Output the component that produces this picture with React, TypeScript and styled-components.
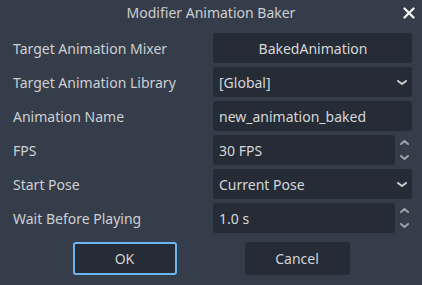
import React from "react";
import styled, { createGlobalStyle } from "styled-components";

const Global = createGlobalStyle`
  html, body {
    margin: 0;
    padding: 0;
    background: #363d4a;
  }
  body {
    font-family: "Noto Sans", "Open Sans", sans-serif;
    font-size: 14px;
    color: #cdcfd2;
  }
`;

const Dialog = styled.div`
  width: 422px;
  height: 285px;
  display: flex;
  flex-direction: column;
  background: #363d4a;
  box-sizing: border-box;
`;

const TitleBar = styled.div`
  height: 25px;
  display: flex;
  align-items: center;
  justify-content: center;
  position: relative;
  color: #cbced3;
`;

const CloseButton = styled.div`
  position: absolute;
  right: 7px;
  top: 6px;
  width: 13px;
  height: 13px;
  display: flex;
  align-items: center;
  justify-content: center;
`;

const Form = styled.div`
  display: grid;
  grid-template-columns: 196px 199px;
  grid-auto-rows: 30px;
  column-gap: 4px;
  row-gap: 4px;
  padding: 8px 10px 0 13px;
`;

const Label = styled.div`
  display: flex;
  align-items: center;
  white-space: nowrap;
`;

const Field = styled.div<{ $center?: boolean }>`
  background: #262c36;
  border-radius: 3px;
  display: flex;
  align-items: center;
  justify-content: ${({ $center }) => ($center ? "center" : "space-between")};
  padding: 0 5px 0 6px;
  box-sizing: border-box;
  color: #d4d6d9;
  white-space: nowrap;
`;

const SpinRow = styled.div`
  display: flex;
  align-items: stretch;
`;

const SpinField = styled(Field)`
  width: 182px;
  flex: none;
`;

const Arrows = styled.div`
  flex: 1;
  display: flex;
  flex-direction: column;
  align-items: center;
  justify-content: center;
  gap: 10px;
  padding-left: 1px;
`;

const Buttons = styled.div`
  display: flex;
  justify-content: center;
  gap: 68px;
  margin-top: 9px;
`;

const Button = styled.div<{ $focused?: boolean; $w: number }>`
  width: ${({ $w }) => $w}px;
  height: 33px;
  box-sizing: border-box;
  background: #262c36;
  border-radius: 3px;
  border: 2px solid ${({ $focused }) => ($focused ? "#6cb5f3" : "#262c36")};
  display: flex;
  align-items: center;
  justify-content: center;
  color: #d0d2d5;
`;

const Chevron = ({ up, color, w = 10 }: { up?: boolean; color: string; w?: number }) => (
  <svg width={w} height="5" viewBox={`0 0 ${w} 5`} style={{ display: "block" }}>
    <path
      d={up ? `M1 4 L${w / 2} 1 L${w - 1} 4` : `M1 1 L${w / 2} 4 L${w - 1} 1`}
      fill="none"
      stroke={color}
      strokeWidth="2"
      strokeLinecap="round"
      strokeLinejoin="round"
    />
  </svg>
);

function Spin({ value }: { value: string }) {
  return (
    <SpinRow>
      <SpinField>{value}</SpinField>
      <Arrows>
        <Chevron up w={9} color="#9fa3a9" />
        <Chevron w={9} color="#9fa3a9" />
      </Arrows>
    </SpinRow>
  );
}

function Select({ value }: { value: string }) {
  return (
    <Field>
      <span>{value}</span>
      <Chevron color="#c9ccd0" />
    </Field>
  );
}

export default function App() {
  return (
    <>
      <Global />
      <Dialog>
        <TitleBar>
          Modifier Animation Baker
          <CloseButton>
            <svg width="12" height="12" viewBox="0 0 12 12">
              <path
                d="M1.5 1.5 L10.5 10.5 M10.5 1.5 L1.5 10.5"
                stroke="#eef0f2"
                strokeWidth="2.4"
                strokeLinecap="round"
              />
            </svg>
          </CloseButton>
        </TitleBar>
        <Form>
          <Label>Target Animation Mixer</Label>
          <Field $center>BakedAnimation</Field>
          <Label>Target Animation Library</Label>
          <Select value="[Global]" />
          <Label>Animation Name</Label>
          <Field>new_animation_baked</Field>
          <Label>FPS</Label>
          <Spin value="30 FPS" />
          <Label>Start Pose</Label>
          <Select value="Current Pose" />
          <Label>Wait Before Playing</Label>
          <Spin value="1.0 s" />
        </Form>
        <Buttons>
          <Button $focused $w={104}>
            OK
          </Button>
          <Button $w={105}>Cancel</Button>
        </Buttons>
      </Dialog>
    </>
  );
}
